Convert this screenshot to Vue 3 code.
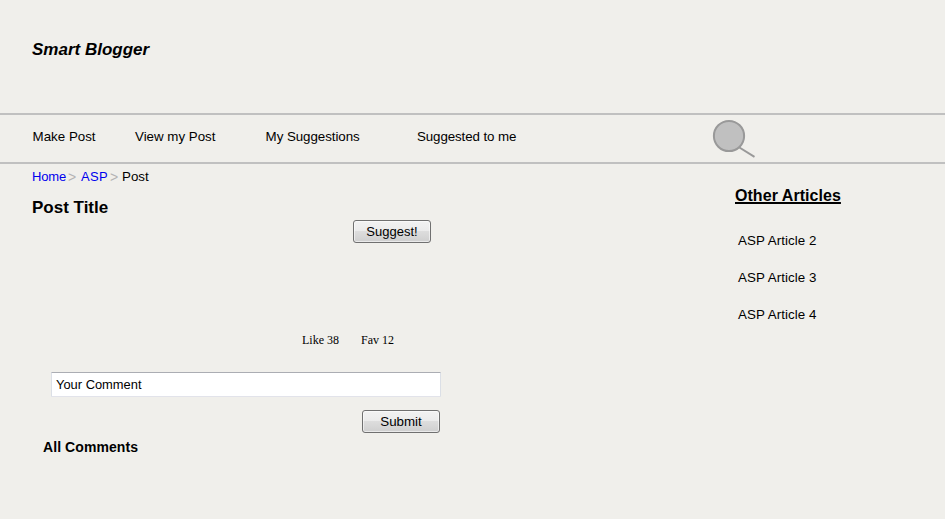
<script setup>
const menu = [
  { label: 'Make Post', cls: 'make' },
  { label: 'View my Post', cls: 'view' },
  { label: 'My Suggestions', cls: 'mine' },
  { label: 'Suggested to me', cls: 'received' },
]
const articles = ['ASP Article 2', 'ASP Article 3', 'ASP Article 4']
</script>

<template>
  <div class="page">
    <header class="header"><h1>Smart Blogger</h1></header>
    <nav class="nav">
      <a v-for="m in menu" :key="m.cls" :class="m.cls">{{ m.label }}</a>
      <svg class="search" width="46" height="42" viewBox="0 0 46 42">
        <path d="M26 28 L43.5 38.8" stroke="#999" stroke-width="2" fill="none" />
        <circle cx="18" cy="18" r="15.1" fill="#c0c0c0" stroke="#999" stroke-width="2" />
      </svg>
    </nav>
    <div class="columns">
      <main class="main">
        <div class="crumbs">
          <a class="home">Home</a><span class="sep">&gt;</span><a class="asp">ASP</a><span class="sep">&gt;</span><span class="current">Post</span>
        </div>
        <h2>Post Title</h2>
        <button class="suggest">Suggest!</button>
        <div class="counts"><span class="like">Like 38</span><span>Fav 12</span></div>
        <input class="comment" type="text" value="Your Comment" />
        <button class="submit">Submit</button>
        <h3>All Comments</h3>
      </main>
      <aside class="aside">
        <h2>Other Articles</h2>
        <a v-for="a in articles" :key="a">{{ a }}</a>
      </aside>
    </div>
  </div>
</template>

<style>
body {
  background: #f0efeb;
}
</style>

<style scoped>
.page {
  box-sizing: border-box;
  height: 519px;
  overflow: hidden;
  background: #f0efeb;
  color: #000;
  font: 13.33px/16px "Liberation Sans", Arial, sans-serif;
  white-space: nowrap;
}
h1, h2, h3 {
  margin: 0;
  font-weight: bold;
}
.header {
  box-sizing: border-box;
  height: 113px;
  padding: 40px 0 0 32px;
}
h1 {
  font-size: 17px;
  line-height: 20px;
  font-style: italic;
}
.nav {
  box-sizing: border-box;
  height: 51px;
  display: flex;
  align-items: flex-start;
  border-top: 2px solid #c0c0c0;
  border-bottom: 2px solid #c0c0c0;
  padding-left: 32.6px;
}
.nav a {
  margin-top: 14px;
}
.make { width: 102.4px; }
.view { width: 130.6px; }
.mine {
  width: 151.4px;
  letter-spacing: -0.05px;
}
.received {
  width: 294px;
  letter-spacing: -0.1px;
}
.search {
  margin-top: 3px;
}
.columns {
  display: flex;
}
.main {
  width: 703px;
  padding-left: 32px;
  display: flex;
  flex-direction: column;
  align-items: flex-start;
}
.crumbs {
  display: flex;
  margin-top: 5px;
  font-size: 13px;
}
.crumbs a {
  color: #0000ee;
}
.home {
  width: 36px;
  letter-spacing: -0.15px;
}
.asp {
  width: 29px;
  letter-spacing: 0.3px;
}
.sep {
  width: 13px;
  font-size: 14px;
  color: #b4b4b4;
}
.sep + .current {
  margin-left: -1px;
  font-size: 13.33px;
}
.main h2 {
  margin-top: 13px;
  font-size: 17px;
  line-height: 20px;
}
button {
  box-sizing: border-box;
  width: 78px;
  height: 23px;
  padding: 0;
  border: 1px solid #707070;
  border-radius: 3px;
  background: linear-gradient(#f2f2f2 0%, #ebebeb 48%, #dddddd 50%, #cfcfcf 100%);
  box-shadow: inset 0 0 0 1px rgba(255, 255, 255, 0.55);
  color: #000;
  font: 13.33px/20px "Liberation Sans", Arial, sans-serif;
}
.suggest {
  margin: 2px 0 0 321px;
  font-size: 13px;
}
.counts {
  display: flex;
  margin: 89px 0 0 270px;
  font: 12px/16px "Liberation Serif", "Times New Roman", serif;
}
.like { width: 59px; }
.comment {
  box-sizing: border-box;
  width: 390px;
  height: 25px;
  margin: 24px 0 0 19px;
  padding: 0 4px;
  border: 1px solid #e2e3ea;
  border-top-color: #abadb3;
  border-left-color: #dbdfe6;
  border-right-color: #dbdfe6;
  border-radius: 1px;
  background: #fff;
  color: #000;
  font: 12.9px "Liberation Sans", Arial, sans-serif;
}
.submit {
  margin: 13px 0 0 330px;
}
h3 {
  margin: 6px 0 0 11px;
  font-size: 14px;
  line-height: 16px;
  letter-spacing: 0.08px;
}
.aside {
  display: flex;
  flex-direction: column;
  align-items: flex-start;
}
.aside h2 {
  margin: 22px 0 27px;
  font-size: 16px;
  line-height: 20px;
  letter-spacing: 0.05px;
  text-decoration: underline;
  text-decoration-thickness: 2px;
  text-decoration-skip-ink: none;
}
.aside a {
  margin: 0 0 21px 3px;
  letter-spacing: 0.08px;
}
</style>
